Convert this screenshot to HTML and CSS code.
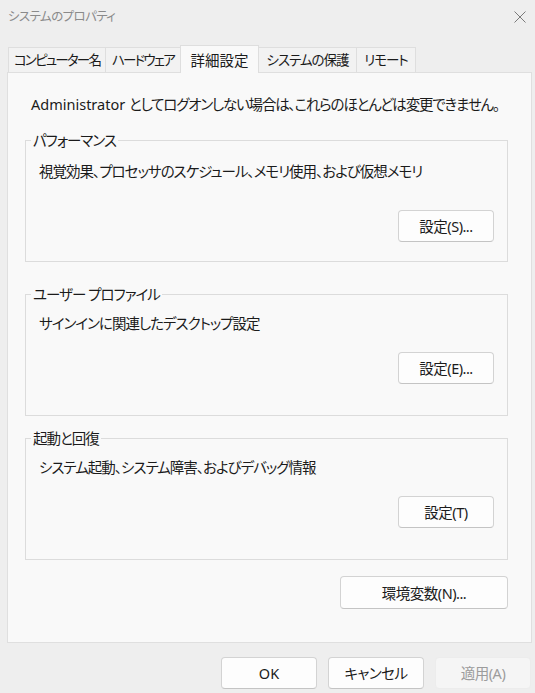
FILE: index.html
```html
<!DOCTYPE html>
<html lang="ja">
<head>
<meta charset="utf-8">
<title>システムのプロパティ</title>
<link rel="stylesheet" href="styles.css">
</head>
<body>
<div class="window">
  <div class="titlebar">
    <span class="title">システムのプロパティ</span>
    <svg class="close" width="12" height="12" viewBox="0 0 12 12" aria-hidden="true">
      <path d="M0.5 0.5 L11.5 11.5 M11.5 0.5 L0.5 11.5" stroke="#7a7a7a" stroke-width="1" fill="none"/>
    </svg>
  </div>
  <div class="tabs">
    <div class="tab tab-computer">コンピューター名</div>
    <div class="tab tab-hardware">ハードウェア</div>
    <div class="tab tab-advanced active">詳細設定</div>
    <div class="tab tab-protection">システムの保護</div>
    <div class="tab tab-remote">リモート</div>
  </div>
  <div class="panel">
    <p class="notice"><span class="latin">Administrator </span>としてログオンしない場合は、これらのほとんどは変更できません。</p>

    <div class="group group-first">
      <div class="group-title">パフォーマンス</div>
      <p class="desc">視覚効果、プロセッサのスケジュール、メモリ使用、および仮想メモリ</p>
      <div class="btn-row"><button class="btn">設定(S)...</button></div>
    </div>

    <div class="group group-second">
      <div class="group-title">ユーザー プロファイル</div>
      <p class="desc">サインインに関連したデスクトップ設定</p>
      <div class="btn-row"><button class="btn">設定(E)...</button></div>
    </div>

    <div class="group group-third">
      <div class="group-title">起動と回復</div>
      <p class="desc">システム起動、システム障害、およびデバッグ情報</p>
      <div class="btn-row"><button class="btn">設定(T)</button></div>
    </div>

    <div class="env-row"><button class="btn btn-wide">環境変数(N)...</button></div>
  </div>
  <div class="footer">
    <button class="btn"><span class="latin">OK</span></button>
    <button class="btn">キャンセル</button>
    <button class="btn" disabled>適用(A)</button>
  </div>
</div>
</body>
</html>
```

FILE: styles.css
```css
* { box-sizing: border-box; }

html, body {
  margin: 0;
  padding: 0;
  background: #eeeeee;
}

body {
  font-family: "Noto Sans", "Noto Sans CJK JP", sans-serif;
  font-size: 14.5px;
  line-height: 20px;
  color: #1b1b1b;
  letter-spacing: -1px;
  font-feature-settings: "palt" 1;
}

.latin { letter-spacing: 0; }

.window {
  width: 535px;
  height: 693px;
  overflow: hidden;
}

.titlebar {
  height: 45px;
  display: flex;
  align-items: flex-start;
  justify-content: space-between;
  padding: 7px 8px 0 8px;
}

.title {
  font-size: 12.5px;
  letter-spacing: -0.6px;
  color: #8a8a8a;
  line-height: 20px;
}

.close {
  margin-top: 4px;
  margin-right: 1px;
}

.tabs {
  display: flex;
  align-items: flex-end;
  height: 28px;
  padding-left: 8px;
  margin-bottom: -1px;
  position: relative;
  z-index: 1;
}

.tab {
  height: 25px;
  margin-bottom: 1px;
  margin-right: -1px;
  padding: 0;
  font-size: 13.5px;
  line-height: 24px;
  text-align: center;
  letter-spacing: -1.8px;
  background: #f2f2f2;
  border: 1px solid #dedede;
  border-bottom: none;
  white-space: nowrap;
  overflow: hidden;
}

.tab-computer { width: 98px; }
.tab-hardware { width: 76px; }
.tab-advanced { width: 79px; }
.tab-protection { width: 99px; }
.tab-remote { width: 60px; }

.tab-protection,
.tab-remote { letter-spacing: -1px; }

.tab.active {
  height: 28px;
  margin-bottom: 0;
  font-size: 14.5px;
  line-height: 28px;
  letter-spacing: 0;
  background: #f9f9f9;
  position: relative;
  z-index: 2;
}

.panel {
  margin-left: 7px;
  width: 525px;
  height: 571px;
  background: #f9f9f9;
  border: 1px solid #dfdfdf;
  padding: 21px 23px 0 17px;
}

.notice {
  margin: 0 0 0 6px;
  letter-spacing: -1.2px;
  white-space: nowrap;
}

.group {
  border: 1px solid #dcdcdc;
  padding: 0 13px 0 13px;
}

.group-first {
  margin-top: 26px;
  padding-bottom: 19px;
}

.group-second {
  margin-top: 32px;
  padding-bottom: 31px;
}

.group-third {
  margin-top: 22px;
  padding-bottom: 31px;
}

.group-title {
  width: fit-content;
  margin: -11px 0 0 -8px;
  padding: 0 2px;
  background: #f9f9f9;
  white-space: nowrap;
}

.desc {
  margin: 9px 0 0 0;
  white-space: nowrap;
}

.group-first .desc { margin-top: 11px; }

.btn-row {
  display: flex;
  justify-content: flex-end;
  margin-top: 19px;
}

.group-first .btn-row { margin-top: 29px; }

.btn {
  font: inherit;
  letter-spacing: -0.5px;
  color: #1b1b1b;
  width: 96px;
  height: 32px;
  padding: 0;
  background: #fdfdfd;
  border: 1px solid #d3d3d3;
  border-bottom-color: #c4c4c4;
  border-radius: 4px;
  font-feature-settings: "palt" 1;
}

.btn:disabled {
  background: #f5f5f5;
  border-color: #ececec;
  color: #9c9c9c;
}

.btn-wide {
  width: 168px;
  height: 33px;
}

.env-row {
  display: flex;
  justify-content: flex-end;
  margin-top: 16px;
}

.footer {
  display: flex;
  justify-content: flex-end;
  gap: 11px;
  margin-top: 14px;
  padding-right: 4px;
}
```
